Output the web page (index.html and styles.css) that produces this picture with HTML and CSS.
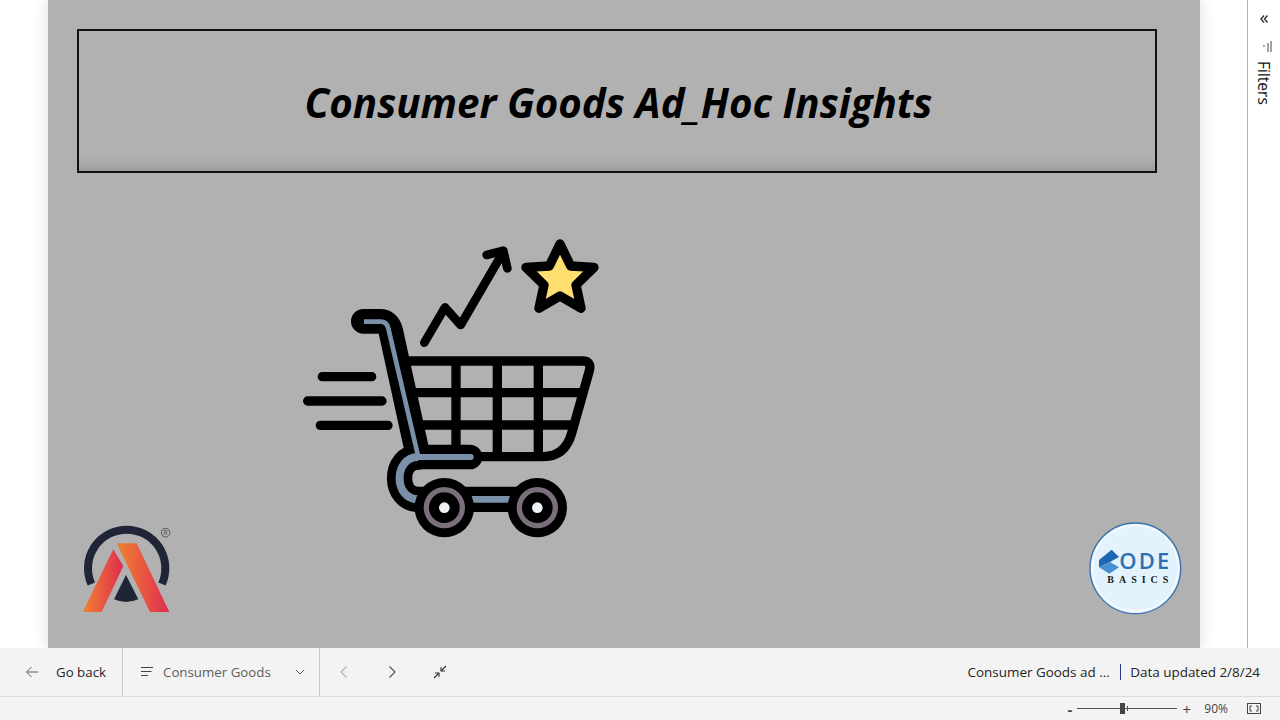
FILE: index.html
```html
<!DOCTYPE html>
<html lang="en">

<head>
    <meta charset="UTF-8">
    <title>Consumer Goods Ad_Hoc Insights</title>
    <link rel="stylesheet" href="styles.css">
</head>

<body>
    <div class="main">
        <div class="stage">
            <div class="canvas">
                <div class="title-box">
                    <h1>Consumer Goods Ad_Hoc Insights</h1>
                </div>

                <!-- cart picture, coordinates are 3x -->
                <svg class="cart" viewBox="0 0 960 960">
                    <g fill="none" stroke="#000" stroke-linecap="round" stroke-linejoin="round">
                        <path stroke-width="26" d="M403 338L465 232L512 285L640 65M590 75L640 62L652 115"/>
                        <path stroke-width="28" fill="#ffdf6f" d="M810 42L842 108L912 112L858 165L873 235L810 198L747 235L762 165L708 112L778 108Z"/>
                        <path stroke-width="28" d="M97 440H245M53 513H276M91 586H294"/>
                        <path stroke-width="28" d="M355 393H878Q905 393 898 422L845 610Q825 680 760 680H560M498 393V680M622 393V680M745 393V680M375 488H875M400 585H850"/>
                        <path stroke-width="74" d="M220 274H270Q295 274 302 302L385 681H540"/>
                        <path stroke-width="76" d="M385 681C310 681 310 808 385 808H700"/>
                        <path stroke="#7a8fa8" stroke-width="14" stroke-linecap="butt" d="M222 275H272Q290 275 295 295L385 681"/>
                        <path stroke="#7a8fa8" stroke-width="18" d="M385 681H542"/>
                        <path stroke="#7a8fa8" stroke-width="24" stroke-linecap="butt" d="M385 681C310 681 310 808 385 808"/>
                        <path stroke="#7a8fa8" stroke-width="20" stroke-linecap="butt" d="M520 808H680"/>
                    </g>
                    <circle cx="463" cy="833" r="89"/>
                    <circle cx="463" cy="833" r="62" fill="#7b6f7c"/>
                    <circle cx="463" cy="833" r="46"/>
                    <circle cx="463" cy="833" r="16" fill="#eef2f5"/>
                    <circle cx="742" cy="833" r="89"/>
                    <circle cx="742" cy="833" r="62" fill="#7b6f7c"/>
                    <circle cx="742" cy="833" r="46"/>
                    <circle cx="742" cy="833" r="16" fill="#eef2f5"/>
                </svg>

                <svg class="logo-a" viewBox="0 0 390 360">
                    <defs>
                        <linearGradient id="grad1" x1="0" y1="0" x2="1" y2="0">
                            <stop offset="0" stop-color="#f08232"/>
                            <stop offset="1" stop-color="#df2c50"/>
                        </linearGradient>
                    </defs>
                    <path d="M94 222A116 116 0 1 1 306 222" fill="none" stroke="#1f2536" stroke-width="24"/>
                    <path d="M160 118L190 168L125 306H68Z" fill="url(#grad1)"/>
                    <path d="M170 100H230L328 306H270Z" fill="url(#grad1)"/>
                    <path d="M198 195L235 268Q198 284 162 268Z" fill="#1f2536"/>
                    <circle cx="317" cy="68" r="13" fill="none" stroke="#444" stroke-width="2.5"/>
                    <text x="317" y="75" class="reg">R</text>
                </svg>

                <svg class="logo-code" viewBox="0 0 390 360">
                    <circle cx="196" cy="175" r="136" fill="#e3f3fd" stroke="#3a6fb0" stroke-width="4"/>
                    <circle cx="196" cy="175" r="129" fill="none" stroke="#fff" stroke-width="3"/>
                    <path d="M87 150L125 119L147 141L120 156L87 172Z" fill="#1f66b4"/>
                    <path d="M87 172L120 156L147 172L118 191Z" fill="#4a90d4"/>
                    <text x="148" y="177" class="code-txt" textLength="150">ODE</text>
                    <text x="112" y="218" class="basics-txt" textLength="183">BASICS</text>
                </svg>
            </div>
        </div>

        <div class="filters">
            <svg class="ico-collapse" viewBox="0 0 10 10">
                <path d="M5 1.500L2 5L5 8.500M8.500 1.500L5.500 5L8.500 8.500" fill="none" stroke="#333" stroke-width="1.400"/>
            </svg>
            <svg class="ico-filter" viewBox="0 0 10 12">
                <path d="M9 0V11M6 2V11M3 5H1" fill="none" stroke="#444" stroke-width="1"/>
            </svg>
            <span class="filters-label">Filters</span>
        </div>
    </div>

    <div class="navbar">
        <div class="nav-item back">
            <svg class="ico" viewBox="0 0 14 14">
                <path d="M13 7H1.500M6.500 2L1.500 7L6.500 12" fill="none" stroke="#605e5c" stroke-width="1"/>
            </svg>
            <span>Go back</span>
        </div>
        <div class="nav-item pages">
            <svg class="ico" viewBox="0 0 14 14">
                <path d="M1 2.500H13M1 6.500H11.500M1 10.500H8" fill="none" stroke="#444" stroke-width="1"/>
            </svg>
            <span>Consumer Goods</span>
            <svg class="ico-small" viewBox="0 0 10 10">
                <path d="M1 3L5 7L9 3" fill="none" stroke="#605e5c" stroke-width="1"/>
            </svg>
        </div>
        <div class="nav-icons">
            <svg class="ico" viewBox="0 0 14 14">
                <path d="M9.500 1.500L4 7L9.500 12.500" fill="none" stroke="#b5b3b1" stroke-width="1.200"/>
            </svg>
            <svg class="ico" viewBox="0 0 14 14">
                <path d="M4.500 1.500L10 7L4.500 12.500" fill="none" stroke="#4a5a6c" stroke-width="1.200"/>
            </svg>
            <svg class="ico" viewBox="0 0 14 14">
                <path d="M13 1L8.500 5.500M8 2V6H12M1 13L5.500 8.500M2 8H6V12" fill="none" stroke="#333" stroke-width="1.100"/>
            </svg>
        </div>
        <div class="nav-right">
            <span>Consumer Goods ad ...</span>
            <i class="blue-line"></i>
            <span>Data updated 2/8/24</span>
        </div>
    </div>

    <div class="statusbar">
        <span class="zoom-sign minus">-</span>
        <div class="slider"><i class="thumb"></i><i class="tick"></i></div>
        <span class="zoom-sign">+</span>
        <span class="zoom-val">90%</span>
        <svg class="ico-fit" viewBox="0 0 14 11">
            <rect x="0.500" y="0.500" width="13" height="10" fill="none" stroke="#444" stroke-width="1"/>
            <path d="M5 3H3V8H5M9 3H11V8H9" fill="none" stroke="#444" stroke-width="1"/>
        </svg>
    </div>
</body>

</html>
```

FILE: styles.css
```css
body {
    margin: 0;
    height: 720px;
    overflow: hidden;
    display: flex;
    flex-direction: column;
    background-color: #fff;
    font-family: "Open Sans", "Liberation Sans", sans-serif;
}
.main {
    height: 648px;
    display: flex;
}

/* report area */
.stage {
    flex: 1;
    padding-left: 48px;
    overflow: hidden;
}
.canvas {
    width: 1152px;
    height: 648px;
    position: relative;
    padding: 29px 0 0 29px;
    box-sizing: border-box;
    background-color: #b1b1b1;
    box-shadow: 0 0 16px rgba(0, 0, 0, 0.14);
}
.title-box {
    width: 1080px;
    height: 144px;
    box-sizing: border-box;
    padding: 2px 0 0 3px;
    display: flex;
    align-items: center;
    justify-content: center;
    border: 2px solid #111;
    box-shadow: inset 0 -14px 12px -10px rgba(0, 0, 0, 0.16);
}
h1 {
    margin: 0;
    font-size: 40.3px;
    font-weight: 700;
    font-style: italic;
    color: #000;
}
.cart {
    position: absolute;
    left: 242px;
    top: 230px;
    width: 320px;
    height: 320px;
}
.logo-a {
    position: absolute;
    left: 12px;
    top: 510px;
    width: 130px;
    height: 120px;
}
.logo-code {
    position: absolute;
    left: 1022px;
    top: 510px;
    width: 130px;
    height: 120px;
}
.reg {
    font-size: 20px;
    text-anchor: middle;
    fill: #444;
}
.code-txt {
    font-size: 66px;
    font-weight: 600;
    fill: #2e6eb3;
}
.basics-txt {
    font-family: "Liberation Serif", serif;
    font-size: 30px;
    font-weight: 700;
    fill: #1a1a1a;
}

/* filters pane */
.filters {
    width: 32px;
    border-left: 1px solid #b3b3b3;
    display: flex;
    flex-direction: column;
    align-items: center;
}
.ico-collapse {
    width: 10px;
    height: 10px;
    margin-top: 14px;
}
.ico-filter {
    width: 10px;
    height: 12px;
    margin: 17px 0 0 6px;
}
.filters-label {
    writing-mode: vertical-rl;
    margin-top: 8px;
    font-size: 15.500px;
    color: #111;
}

/* bottom nav */
.navbar {
    height: 48px;
    flex-shrink: 0;
    display: flex;
    align-items: center;
    background-color: #f3f3f3;
    border-bottom: 1px solid #dcdcdc;
    font-size: 13.300px;
}
.nav-item {
    height: 48px;
    display: flex;
    align-items: center;
    box-sizing: border-box;
    border-right: 1px solid #c8c8c8;
}
.back {
    width: 123px;
    padding-left: 25px;
    color: #252423;
    gap: 17px;
}
.pages {
    width: 197px;
    padding-left: 17px;
    color: #605e5c;
    gap: 9px;
}
.ico {
    width: 14px;
    height: 14px;
    flex-shrink: 0;
}
.ico-small {
    width: 10px;
    height: 10px;
    margin-left: 15px;
}
.nav-icons {
    display: flex;
    gap: 34px;
    padding-left: 17px;
}
.nav-right {
    margin-left: auto;
    padding-right: 20px;
    display: flex;
    align-items: center;
    font-size: 13.450px;
    color: #252423;
}
.blue-line {
    width: 1.500px;
    height: 16px;
    margin: 0 9px 0 10px;
    background-color: #2b3a8c;
}

/* zoom bar */
.statusbar {
    flex: 1;
    display: flex;
    align-items: center;
    justify-content: flex-end;
    padding-right: 19px;
    background-color: #f3f3f3;
    font-size: 12px;
    color: #444;
}
.zoom-sign {
    font-size: 15px;
    width: 9px;
    text-align: center;
}
.minus {
    font-weight: 700;
}
.slider {
    width: 100px;
    height: 1px;
    margin: 0 5px 0 3px;
    position: relative;
    background-color: #555;
}
.thumb {
    position: absolute;
    left: 43px;
    top: -5px;
    width: 5px;
    height: 11px;
    background-color: #444;
}
.tick {
    position: absolute;
    left: 50px;
    top: -2px;
    width: 1px;
    height: 5px;
    background-color: #555;
}
.zoom-val {
    margin: 0 19px 0 13px;
}
.ico-fit {
    width: 14px;
    height: 11px;
}
```
